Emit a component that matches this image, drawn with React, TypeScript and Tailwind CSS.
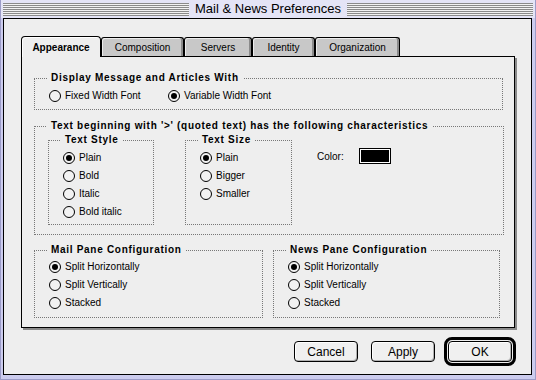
import type { ReactNode } from 'react'

function Radio({ label, on, className = '' }: { label: string; on?: boolean; className?: string }) {
  return (
    <div className={`flex h-[18px] items-center gap-[4px] ${className}`}>
      <span className="flex h-[12px] w-[12px] shrink-0 items-center justify-center rounded-full border border-black bg-[#f2f2f2]">
        {on && <span className="h-[6px] w-[6px] rounded-full bg-black" />}
      </span>
      <span className="leading-[12px]">{label}</span>
    </div>
  )
}

function Group({ title, className = '', children }: { title: string; className?: string; children: ReactNode }) {
  return (
    <fieldset className={`border border-dotted border-[#777777] ${className}`}>
      <legend className="ml-[12px] px-[4px] text-[10px] font-bold leading-[12px] tracking-[0.7px]">{title}</legend>
      {children}
    </fieldset>
  )
}

function Tab({ label, w }: { label: string; w: string }) {
  return (
    <div
      className={`flex h-[19px] items-center justify-center rounded-t-[3px] border-x border-t border-black bg-[#c8c8c8] shadow-[inset_-2px_0_0_#8a8a8a,inset_1px_1px_0_#ececec] ${w}`}
    >
      {label}
    </div>
  )
}

function Button({ label }: { label: string }) {
  return (
    <div className="flex h-[21px] w-[64px] items-center justify-center rounded-[4px] border border-black bg-[#f0f0f0] text-[12px] shadow-[inset_1px_1px_0_#ffffff,inset_-1px_-1px_0_#b0b0b0]">
      {label}
    </div>
  )
}

export default function App() {
  return (
    <div className="flex h-[380px] w-[536px] flex-col border-x border-b border-[#9c9cc8] bg-[#ccccee] font-['Liberation_Sans',Arial,sans-serif] text-[10px] text-black">
      {/* title bar */}
      <div className="flex h-[18px] items-start bg-[#e4e4f6] px-[2px] pt-[3px]">
        <div className="h-[13px] flex-1 bg-[image:repeating-linear-gradient(to_bottom,#8a8a8a_0px,#8a8a8a_1px,#f2f2f2_1px,#f2f2f2_2px)]" />
        <div className="-mt-[3px] px-[6px] text-[13px] leading-[18px]">Mail &amp; News Preferences</div>
        <div className="h-[13px] flex-1 bg-[image:repeating-linear-gradient(to_bottom,#8a8a8a_0px,#8a8a8a_1px,#f2f2f2_1px,#f2f2f2_2px)]" />
      </div>

      <div className="mb-[4px] ml-[2px] mr-[3px] flex flex-1 flex-col border border-black bg-[#eeeeee] pl-[17px] pt-[17px]">
        {/* tabs */}
        <div className="flex items-end">
          <div className="relative z-10 -mb-px flex h-[21px] w-[80px] items-center justify-center rounded-t-[4px] border-x border-t border-black bg-[#eeeeee] font-bold shadow-[inset_1px_1px_0_#ffffff]">
            Appearance
          </div>
          <Tab label="Composition" w="w-[83px]" />
          <Tab label="Servers" w="w-[68px]" />
          <Tab label="Identity" w="w-[63px]" />
          <Tab label="Organization" w="w-[85px]" />
        </div>

        {/* panel */}
        <div className="h-[272px] w-[494px] border border-black bg-[#eeeeee] pl-[12px] pt-[15px] shadow-[2px_2px_0_#8a8a8a]">
          <Group title="Display Message and Articles With" className="w-[469px]">
            <div className="flex pb-[4px] pl-[14px] pt-[3px]">
              <Radio label="Fixed Width Font" className="w-[119px]" />
              <Radio label="Variable Width Font" on />
            </div>
          </Group>

          <Group title="Text beginning with '>' (quoted text) has the following characteristics" className="mt-[10px] w-[470px]">
            <div className="flex items-start pb-[9px] pl-[13px] pt-[2px]">
              <Group title="Text Style" className="w-[106px]">
                <div className="pb-[3px] pl-[14px] pt-[3px]">
                  <Radio label="Plain" on />
                  <Radio label="Bold" />
                  <Radio label="Italic" />
                  <Radio label="Bold italic" />
                </div>
              </Group>
              <Group title="Text Size" className="ml-[31px] h-[91px] w-[107px]">
                <div className="pl-[14px] pt-[3px]">
                  <Radio label="Plain" on />
                  <Radio label="Bigger" />
                  <Radio label="Smaller" />
                </div>
              </Group>
              <div className="ml-[25px] mt-[14px] flex h-[16px] items-center gap-[15px]">
                <span>Color:</span>
                <span className="h-[16px] w-[32px] border border-black bg-black shadow-[inset_0_0_0_1px_#ffffff]" />
              </div>
            </div>
          </Group>

          <div className="mt-[9px] flex items-start">
            <Group title="Mail Pane Configuration" className="w-[229px]">
              <div className="pb-[5px] pl-[14px] pt-[2px]">
                <Radio label="Split Horizontally" on />
                <Radio label="Split Vertically" />
                <Radio label="Stacked" />
              </div>
            </Group>
            <Group title="News Pane Configuration" className="ml-[10px] w-[227px]">
              <div className="pb-[5px] pl-[14px] pt-[2px]">
                <Radio label="Split Horizontally" on />
                <Radio label="Split Vertically" />
                <Radio label="Stacked" />
              </div>
            </Group>
          </div>
        </div>

        {/* buttons */}
        <div className="mt-[9px] flex w-[495px] items-center justify-end">
          <Button label="Cancel" />
          <div className="ml-[13px]">
            <Button label="Apply" />
          </div>
          <div className="ml-[9px] rounded-[8px] border-[3px] border-black p-px">
            <Button label="OK" />
          </div>
        </div>
      </div>
    </div>
  )
}
